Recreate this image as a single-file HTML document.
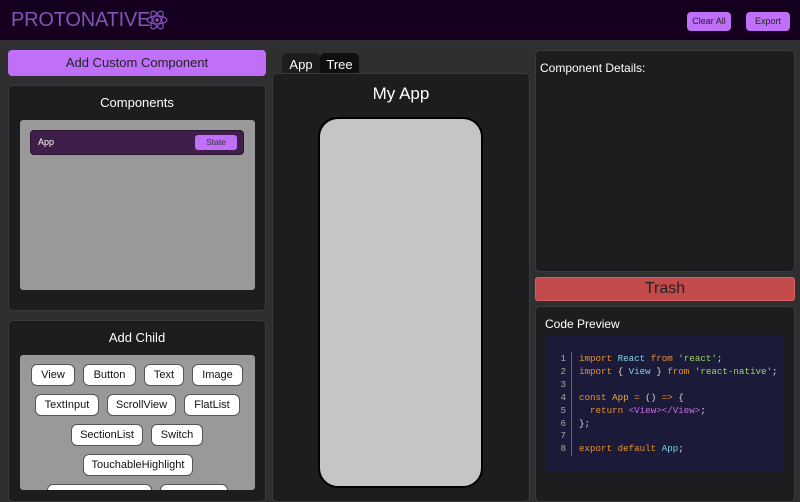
<html><head><style>
*{box-sizing:border-box;margin:0;padding:0}
body{width:800px;height:502px;background:#2f2e30;font-family:"Liberation Sans",sans-serif;position:relative;overflow:hidden;color:#fff}
.a{position:absolute}
.panel{position:absolute;background:#1d1c1e;border:1px solid #3a393b;border-radius:5px}
.btn{position:absolute;background:#fff;color:#111;border:1px solid #555;border-radius:6px;font-size:11px;text-align:center;line-height:20px;height:22px}
.code{font-family:"Liberation Mono",monospace;font-size:9.2px;line-height:12.9px;white-space:pre}
.k{color:#e8932b}.c{color:#7fd3e8}.s{color:#9ed46a}.t{color:#c86fe0}.w{color:#ddd}
</style></head><body>
<div class="a" style="left:0;top:0;width:800px;height:41px;background:#14001e;border-bottom:1px solid #333"></div>
<div class="a" style="left:11px;top:9px;font-size:20px;color:#8552b8;letter-spacing:-0.2px">PROTONATIVE</div>
<svg class="a" style="left:146px;top:8px" width="22" height="24" viewBox="0 0 22 24"><g fill="none" stroke="#8552b8" stroke-width="1.2"><ellipse cx="11" cy="12" rx="10" ry="4"/><ellipse cx="11" cy="12" rx="10" ry="4" transform="rotate(60 11 12)"/><ellipse cx="11" cy="12" rx="10" ry="4" transform="rotate(120 11 12)"/></g><circle cx="11" cy="12" r="1.8" fill="#8552b8"/></svg>
<div class="a" style="left:687px;top:12px;width:44px;height:19px;background:#bf6ff8;border-radius:4px;color:#222;font-size:9px;text-align:center;line-height:19px">Clear All</div>
<div class="a" style="left:746px;top:12px;width:44px;height:19px;background:#bf6ff8;border-radius:4px;color:#222;font-size:9px;text-align:center;line-height:19px">Export</div>

<div class="a" style="left:8px;top:50px;width:258px;height:26px;background:#bf6ff8;border-radius:4px;color:#222;font-size:13px;text-align:center;line-height:26px">Add Custom Component</div>
<div class="panel" style="left:8px;top:85px;width:258px;height:226px"></div>
<div class="a" style="left:8px;top:95px;width:258px;text-align:center;font-size:13px">Components</div>
<div class="a" style="left:20px;top:120px;width:235px;height:170px;background:#9a999a;border-radius:3px"></div>
<div class="a" style="left:30px;top:130px;width:214px;height:25px;background:#3f1f4a;border-radius:4px;border:1px solid #2a1533"></div>
<div class="a" style="left:38px;top:137px;font-size:9px">App</div>
<div class="a" style="left:195px;top:135px;width:42px;height:15px;background:#bf6ff8;border-radius:3px;color:#333;font-size:8.5px;text-align:center;line-height:15px">State</div>

<div class="panel" style="left:8px;top:320px;width:258px;height:182px"></div>
<div class="a" style="left:8px;top:330px;width:258px;text-align:center;font-size:13px">Add Child</div>
<div class="a" style="left:20px;top:355px;width:235px;height:135px;background:#9a999a;border-radius:3px;overflow:hidden">
<div class="btn" style="left:11px;top:9px;width:44px">View</div>
<div class="btn" style="left:63px;top:9px;width:53px">Button</div>
<div class="btn" style="left:124px;top:9px;width:40px">Text</div>
<div class="btn" style="left:172px;top:9px;width:51px">Image</div>
<div class="btn" style="left:15px;top:39px;width:64px">TextInput</div>
<div class="btn" style="left:87px;top:39px;width:69px">ScrollView</div>
<div class="btn" style="left:164px;top:39px;width:56px">FlatList</div>
<div class="btn" style="left:51px;top:69px;width:72px">SectionList</div>
<div class="btn" style="left:131px;top:69px;width:52px">Switch</div>
<div class="btn" style="left:63px;top:99px;width:110px">TouchableHighlight</div>
<div class="btn" style="left:27px;top:129px;width:105px"></div>
<div class="btn" style="left:140px;top:129px;width:68px"></div>
</div>

<div class="a" style="left:282px;top:53px;width:38px;height:22px;background:#1d1c1e;border-radius:5px 5px 0 0;font-size:13px;text-align:center;line-height:24px">App</div>
<div class="a" style="left:320px;top:53px;width:39px;height:21px;background:#0f0e10;border-radius:5px 5px 0 0;font-size:13px;text-align:center;line-height:24px">Tree</div>
<div class="panel" style="left:272px;top:73px;width:258px;height:429px"></div>
<div class="a" style="left:272px;top:84px;width:258px;text-align:center;font-size:17px">My App</div>
<div class="a" style="left:318px;top:117px;width:165px;height:371px;background:#c6c4c7;border:2px solid #000;border-radius:20px"></div>

<div class="panel" style="left:535px;top:50px;width:260px;height:222px"></div>
<div class="a" style="left:540px;top:61px;font-size:12px">Component Details:</div>
<div class="a" style="left:535px;top:277px;width:260px;height:24px;background:#c24a4a;border:1px solid #d86060;border-radius:3px;color:#222;font-size:16px;text-align:center;line-height:22px">Trash</div>
<div class="panel" style="left:535px;top:306px;width:260px;height:196px"></div>
<div class="a" style="left:545px;top:317px;font-size:12px">Code Preview</div>
<div class="a" style="left:546px;top:335px;width:238px;height:137px;background:#1b1a38"></div>
<div class="a code w" style="left:556px;top:353px;width:10px;text-align:right;color:#aaa">1
2
3
4
5
6
7
8</div>
<div class="a" style="left:571px;top:352px;width:1px;height:104px;background:#666"></div>
<div class="a code w" style="left:579px;top:353px"><span class="k">import</span> <span class="c">React</span> <span class="k">from</span> <span class="s">'react'</span>;
<span class="k">import</span> { <span class="c">View</span> } <span class="k">from</span> <span class="s">'react-native'</span>;

<span class="k">const</span> <span style="color:#f0b030">App</span> <span class="k">=</span> () <span class="k">=&gt;</span> {
  <span class="k">return</span> <span class="t">&lt;View&gt;&lt;/View&gt;</span>;
};

<span class="k">export default</span> <span class="c">App</span>;</div>
</body></html>
